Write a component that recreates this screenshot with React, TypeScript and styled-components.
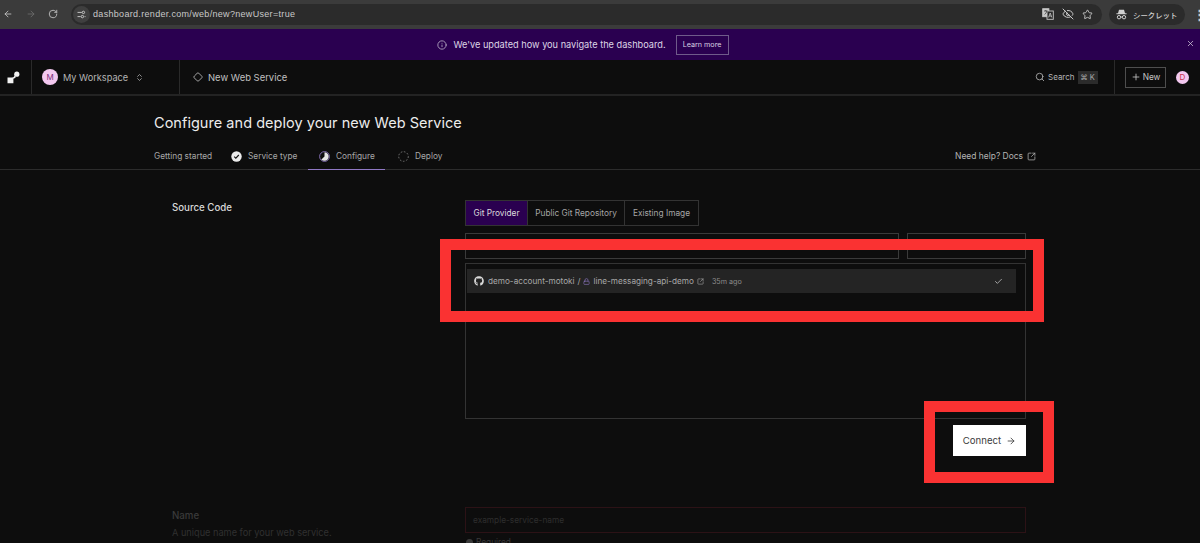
import styled, { createGlobalStyle } from "styled-components";
import {
  ArrowLeft,
  ArrowRight,
  Check,
  ChevronsUpDown,
  Diamond,
  EyeOff,
  Info,
  Lock,
  Plus,
  RotateCw,
  Search,
  Star,
  SquareArrowOutUpRight,
  X,
} from "lucide-react";
import { FaGithub } from "react-icons/fa";

const GlobalStyle = createGlobalStyle`
  html, body { margin: 0; padding: 0; background: #0d0d0d; }
  body { font-family: Inter, "Noto Sans CJK JP", sans-serif; overflow: hidden; }
  * { box-sizing: border-box; }
`;

const Page = styled.div`
  position: relative;
  width: 1200px;
  height: 543px;
  overflow: hidden;
  display: flex;
  flex-direction: column;
  background: #0d0d0d;
`;

/* browser chrome */
const BrowserBar = styled.div`
  height: 29px;
  flex: none;
  display: flex;
  align-items: center;
  padding: 0 0 1px 3px;
  background: #3b3b3b;
  color: #c8c8c8;
`;

const NavIcons = styled.div`
  width: 68px;
  flex: none;
  display: flex;
  align-items: center;
  gap: 12.5px;
`;

const Omnibox = styled.div`
  width: 1031px;
  height: 21px;
  flex: none;
  display: flex;
  align-items: center;
  border-radius: 11px;
  background: #2b2b2b;
  padding: 0 9px 0 2px;
`;

const SiteBadge = styled.span`
  width: 17px;
  height: 17px;
  flex: none;
  display: flex;
  align-items: center;
  justify-content: center;
  border-radius: 50%;
  background: #3f3f3f;
  margin-right: 3px;
`;

const Url = styled.span`
  flex: 1;
  font-size: 9px;
  color: #c9c9c9;
  font-family: "Liberation Sans", sans-serif;
  letter-spacing: 0.035em;
`;

const OmniIcons = styled.div`
  display: flex;
  align-items: center;
  gap: 8px;
`;

const IncognitoPill = styled.div`
  width: 76px;
  height: 21px;
  flex: none;
  margin-left: 7px;
  display: flex;
  align-items: center;
  gap: 6px;
  padding-left: 7px;
  border-radius: 11px;
  background: #2b2b2b;
  font-size: 7.4px;
  font-weight: 500;
  color: #d0d0d0;
`;

const BrowserMenu = styled.span`
  margin-left: 8px;
  font-size: 13px;
  font-weight: 700;
  color: #c8c8c8;
`;

/* announcement */
const Banner = styled.div`
  position: relative;
  height: 31px;
  flex: none;
  display: flex;
  align-items: center;
  justify-content: center;
  gap: 6px;
  padding-right: 34px;
  background: #2a0050;
  color: #ded6e6;
  font-size: 9.2px;
`;

const LearnMore = styled.span`
  margin-left: 4px;
  height: 20px;
  width: 53px;
  display: flex;
  align-items: center;
  justify-content: center;
  border: 1px solid #6f5a8a;
  font-size: 7.2px;
  color: #d8d0e0;
`;

const BannerClose = styled.span`
  position: absolute;
  right: 5px;
  top: 10px;
  display: flex;
  color: #cfc6d8;
`;

/* app nav */
const TopNav = styled.div`
  height: 36px;
  flex: none;
  display: flex;
  align-items: stretch;
  border-bottom: 2px solid #232323;
  color: #b4b4b4;
  font-size: 9.2px;
`;

const LogoCell = styled.div`
  width: 32px;
  flex: none;
  display: flex;
  align-items: center;
  padding-left: 7px;
  border-right: 1px solid #2a2a2a;
`;

const WorkspaceCell = styled.div`
  width: 148px;
  flex: none;
  display: flex;
  align-items: center;
  padding-left: 10px;
  gap: 5px;
  border-right: 1px solid #2a2a2a;
`;

const Avatar = styled.span<{ $size: number; $ink: string }>`
  width: ${(p) => p.$size}px;
  height: ${(p) => p.$size}px;
  flex: none;
  display: flex;
  align-items: center;
  justify-content: center;
  border-radius: 50%;
  background: #f3c8f0;
  color: ${(p) => p.$ink};
  font-size: 8px;
`;

const ServiceCell = styled.div`
  flex: 1;
  display: flex;
  align-items: center;
  gap: 5px;
  padding-left: 13px;
  font-size: 9.45px;
  color: #c0c0c0;
`;

const SearchCell = styled.div`
  width: 64px;
  flex: none;
  display: flex;
  align-items: center;
  gap: 3px;
  font-size: 8px;
`;

const Kbd = styled.span`
  width: 20px;
  height: 13px;
  flex: none;
  display: flex;
  align-items: center;
  justify-content: center;
  background: #2b2b2b;
  font-size: 7.5px;
  color: #a8a8a8;
`;

const ActionsCell = styled.div`
  width: 86px;
  margin-left: 15px;
  flex: none;
  display: flex;
  align-items: center;
  gap: 10px;
  padding-left: 10px;
  border-left: 1px solid #2a2a2a;
`;

const NewButton = styled.span`
  width: 41px;
  height: 21px;
  display: flex;
  align-items: center;
  justify-content: center;
  gap: 2px;
  border: 1px solid #4e4e4e;
  font-size: 8.3px;
  color: #c4c4c4;
`;

/* page head */
const Title = styled.h1`
  margin: 0;
  padding: 17px 0 0 154px;
  height: 48px;
  flex: none;
  font-size: 14.5px;
  line-height: 20px;
  font-weight: 400;
  color: #ececec;
  letter-spacing: 0.04px;
`;

const Steps = styled.div`
  height: 26px;
  flex: none;
  display: flex;
  align-items: stretch;
  padding: 0 164px 0 154px;
  border-bottom: 1px solid #2c2c2c;
  font-size: 8.3px;
  color: #a8a8a8;
`;

const Step = styled.div<{ $active?: boolean; $w: number; $indent?: number }>`
  width: ${(p) => p.$w}px;
  flex: none;
  display: flex;
  align-items: center;
  gap: 6px;
  padding-left: ${(p) => p.$indent ?? 0}px;
  padding-bottom: 1px;
  margin-bottom: -1px;
  border-bottom: 1px solid ${(p) => (p.$active ? "#8f78c4" : "transparent")};
`;

const Help = styled.div`
  margin-left: auto;
  display: flex;
  align-items: center;
  gap: 4px;
  padding-bottom: 1px;
  font-size: 8.45px;
  color: #b4b4b4;
`;

/* form */
const FormSection = styled.section<{ $top: number }>`
  display: grid;
  grid-template-columns: 293px 561px;
  margin-top: ${(p) => p.$top}px;
  padding-left: 172px;
  flex: none;
`;

const Label = styled.div<{ $faded?: boolean }>`
  padding-top: ${(p) => (p.$faded ? 3 : 2)}px;
  font-size: 9.7px;
  font-weight: 500;
  color: ${(p) => (p.$faded ? "#3a3a3a" : "#d8d8d8")};
`;

const Hint = styled.div`
  margin-top: 6px;
  font-size: 9.2px;
  color: #303030;
`;

const Tabs = styled.div`
  display: flex;
  width: 234px;
  height: 26px;
  border: 1px solid #333;
`;

const Tab = styled.div<{ $on?: boolean; $w: number }>`
  width: ${(p) => p.$w}px;
  flex: none;
  display: flex;
  align-items: center;
  justify-content: center;
  border-right: 1px solid #333;
  font-size: 8.3px;
  color: ${(p) => (p.$on ? "#dcdcdc" : "#a6a6a6")};
  background: ${(p) => (p.$on ? "#2a0050" : "transparent")};
  &:last-child { border-right: 0; }
`;

const FilterRow = styled.div`
  display: flex;
  gap: 8px;
  margin-top: 7px;
`;

const FilterBox = styled.div<{ $w: number }>`
  width: ${(p) => p.$w}px;
  height: 26px;
  border: 1px solid #3a3a3a;
`;

const RepoList = styled.div`
  height: 156px;
  margin-top: 4px;
  padding: 5px 9px 0 1px;
  border: 1px solid #333;
`;

const RepoRow = styled.div`
  height: 24px;
  display: flex;
  align-items: center;
  padding: 0 13px 0 7px;
  background: #242424;
  font-size: 8.2px;
  color: #a8a8a8;
`;

const RepoSlash = styled.span`
  margin: 0 3px;
`;

const RepoAge = styled.span`
  margin-left: 8px;
  font-size: 7.2px;
  color: #8c8c8c;
`;

const ButtonRow = styled.div`
  display: flex;
  justify-content: flex-end;
  margin-top: 6px;
`;

const ConnectButton = styled.button`
  width: 73px;
  height: 31px;
  display: flex;
  align-items: center;
  justify-content: center;
  gap: 5px;
  border: 0;
  padding: 0;
  background: #fff;
  color: #3c3c3c;
  font-family: inherit;
  font-size: 9.6px;
`;

const NameInput = styled.div`
  height: 26px;
  display: flex;
  align-items: center;
  padding-left: 7px;
  border: 1px solid #2c1216;
  font-size: 8.3px;
  color: #2d2d2d;
`;

const Required = styled.div`
  margin-top: 4px;
  display: flex;
  align-items: center;
  gap: 3px;
  font-size: 8.3px;
  color: #3a3a3a;
`;

const RequiredDot = styled.span`
  width: 7px;
  height: 7px;
  margin-left: 1px;
  border-radius: 50%;
  background: #3a3a3a;
`;

/* red annotation frames drawn on top of the screenshot */
const Callout = styled.div<{ $l: number; $t: number; $w: number; $h: number }>`
  position: absolute;
  left: ${(p) => p.$l}px;
  top: ${(p) => p.$t}px;
  width: ${(p) => p.$w}px;
  height: ${(p) => p.$h}px;
  border: 11px solid #fa3232;
`;

const RenderLogo = () => (
  <svg width="13" height="13" viewBox="0 0 13 13" fill="#f2f2f2">
    <circle cx="9.8" cy="3.2" r="2.6" />
    <path d="M0.5 6.5 H5 C7 6.5 7.2 5 7.6 4.4 L9 6 C8 7 7.2 7.6 6.4 7.8 V12.3 H0.5 Z" />
  </svg>
);

const TranslateIcon = () => (
  <svg width="12" height="12" viewBox="0 0 12 12" fill="none" stroke="#c8c8c8" strokeWidth="0.9">
    <rect x="0.7" y="0.7" width="6.2" height="8" fill="#c8c8c8" />
    <rect x="5" y="3" width="6.3" height="8.3" fill="#2b2b2b" />
    <path d="M6.6 9.4 L8.2 5 L9.8 9.4 M7.2 8 H9.2" strokeWidth="0.8" />
    <path d="M2 3 H5.6 M3.8 2 V3 M2.6 6.4 C3.8 5.6 4.6 4.4 4.8 3" stroke="#2b2b2b" strokeWidth="0.7" />
  </svg>
);

const IncognitoIcon = () => (
  <svg width="11" height="11" viewBox="0 0 11 11" fill="#d0d0d0">
    <path d="M3 0.8 H8 L9 4.2 H10.6 V5.2 H0.4 V4.2 H2 Z" />
    <circle cx="3" cy="8.2" r="1.7" fill="none" stroke="#d0d0d0" strokeWidth="1" />
    <circle cx="8" cy="8.2" r="1.7" fill="none" stroke="#d0d0d0" strokeWidth="1" />
    <rect x="4.6" y="7.6" width="1.8" height="0.9" />
  </svg>
);

const SiteSettingsIcon = () => (
  <svg width="9" height="9" viewBox="0 0 9 9" fill="none" stroke="#d0d0d0" strokeWidth="0.9">
    <path d="M0.5 2.4 H4.8 M7.6 6.6 H8.5 M0.5 6.6 H3.6" />
    <circle cx="6.4" cy="2.4" r="1.2" />
    <circle cx="5.4" cy="6.6" r="1.2" />
  </svg>
);

const ServiceDone = () => (
  <svg width="11" height="11" viewBox="0 0 11 11">
    <circle cx="5.5" cy="5.5" r="5.2" fill="#ececec" />
    <path d="M3.2 5.7 L4.8 7.2 L7.8 4" fill="none" stroke="#111" strokeWidth="1.1" />
  </svg>
);

const ConfigureProgress = () => (
  <svg width="11" height="11" viewBox="0 0 11 11">
    <circle cx="5.5" cy="5.5" r="4.9" fill="none" stroke="#8f78c4" strokeWidth="0.9" />
    <path d="M5.5 1.3 A4.2 4.2 0 1 1 2.4 8.4 L5.5 5.5 Z" fill="#e4e4e4" />
  </svg>
);

const DeployPending = () => (
  <svg width="11" height="11" viewBox="0 0 11 11">
    <circle cx="5.5" cy="5.5" r="4.8" fill="none" stroke="#777" strokeWidth="1" strokeDasharray="1.6 1.6" />
  </svg>
);

export default function App() {
  return (
    <Page>
      <GlobalStyle />
      <BrowserBar>
        <NavIcons>
          <ArrowLeft size={10} />
          <ArrowRight size={10} color="#6e6e6e" />
          <RotateCw size={10} />
        </NavIcons>
        <Omnibox>
          <SiteBadge>
            <SiteSettingsIcon />
          </SiteBadge>
          <Url>dashboard.render.com/web/new?newUser=true</Url>
          <OmniIcons>
            <TranslateIcon />
            <EyeOff size={12} />
            <Star size={11} />
          </OmniIcons>
        </Omnibox>
        <IncognitoPill>
          <IncognitoIcon />
          シークレット
        </IncognitoPill>
        <BrowserMenu>⋮</BrowserMenu>
      </BrowserBar>

      <Banner>
        <Info size={10} color="#b9aec6" />
        <span>We've updated how you navigate the dashboard.</span>
        <LearnMore>Learn more</LearnMore>
        <BannerClose>
          <X size={9} />
        </BannerClose>
      </Banner>

      <TopNav>
        <LogoCell>
          <RenderLogo />
        </LogoCell>
        <WorkspaceCell>
          <Avatar $size={16} $ink="#7a2f7a">M</Avatar>
          My Workspace
          <ChevronsUpDown size={9} style={{ marginLeft: 2 }} />
        </WorkspaceCell>
        <ServiceCell>
          <Diamond size={10} />
          New Web Service
        </ServiceCell>
        <SearchCell>
          <Search size={10} />
          Search
          <Kbd>⌘ K</Kbd>
        </SearchCell>
        <ActionsCell>
          <NewButton>
            <Plus size={10} />
            New
          </NewButton>
          <Avatar $size={13} $ink="#c9304a">D</Avatar>
        </ActionsCell>
      </TopNav>

      <Title>Configure and deploy your new Web Service</Title>

      <Steps>
        <Step $w={77}>Getting started</Step>
        <Step $w={77}>
          <ServiceDone />
          Service type
        </Step>
        <Step $w={77} $active $indent={11}>
          <ConfigureProgress />
          Configure
        </Step>
        <Step $w={77} $indent={13}>
          <DeployPending />
          Deploy
        </Step>
        <Help>
          Need help? Docs
          <SquareArrowOutUpRight size={9} />
        </Help>
      </Steps>

      <FormSection $top={30}>
        <Label>Source Code</Label>
        <div>
          <Tabs>
            <Tab $on $w={62}>Git Provider</Tab>
            <Tab $w={97}>Public Git Repository</Tab>
            <Tab $w={73}>Existing Image</Tab>
          </Tabs>
          <FilterRow>
            <FilterBox $w={434} />
            <FilterBox $w={119} />
          </FilterRow>
          <RepoList>
            <RepoRow>
              <FaGithub size={10} color="#d8d8d8" style={{ marginRight: 4 }} />
              demo-account-motoki
              <RepoSlash>/</RepoSlash>
              <Lock size={7} color="#8f78c4" style={{ marginRight: 3 }} />
              line-messaging-api-demo
              <SquareArrowOutUpRight size={7} style={{ marginLeft: 3 }} />
              <RepoAge>35m ago</RepoAge>
              <Check size={9} color="#c8c8c8" style={{ marginLeft: "auto" }} />
            </RepoRow>
          </RepoList>
          <ButtonRow>
            <ConnectButton>
              Connect
              <ArrowRight size={10} />
            </ConnectButton>
          </ButtonRow>
        </div>
      </FormSection>

      <FormSection $top={51}>
        <div>
          <Label $faded>Name</Label>
          <Hint>A unique name for your web service.</Hint>
        </div>
        <div>
          <NameInput>example-service-name</NameInput>
          <Required>
            <RequiredDot />
            Required
          </Required>
        </div>
      </FormSection>

      <Callout $l={440} $t={239} $w={604} $h={83} />
      <Callout $l={924} $t={401} $w={130} $h={82} />
    </Page>
  );
}
